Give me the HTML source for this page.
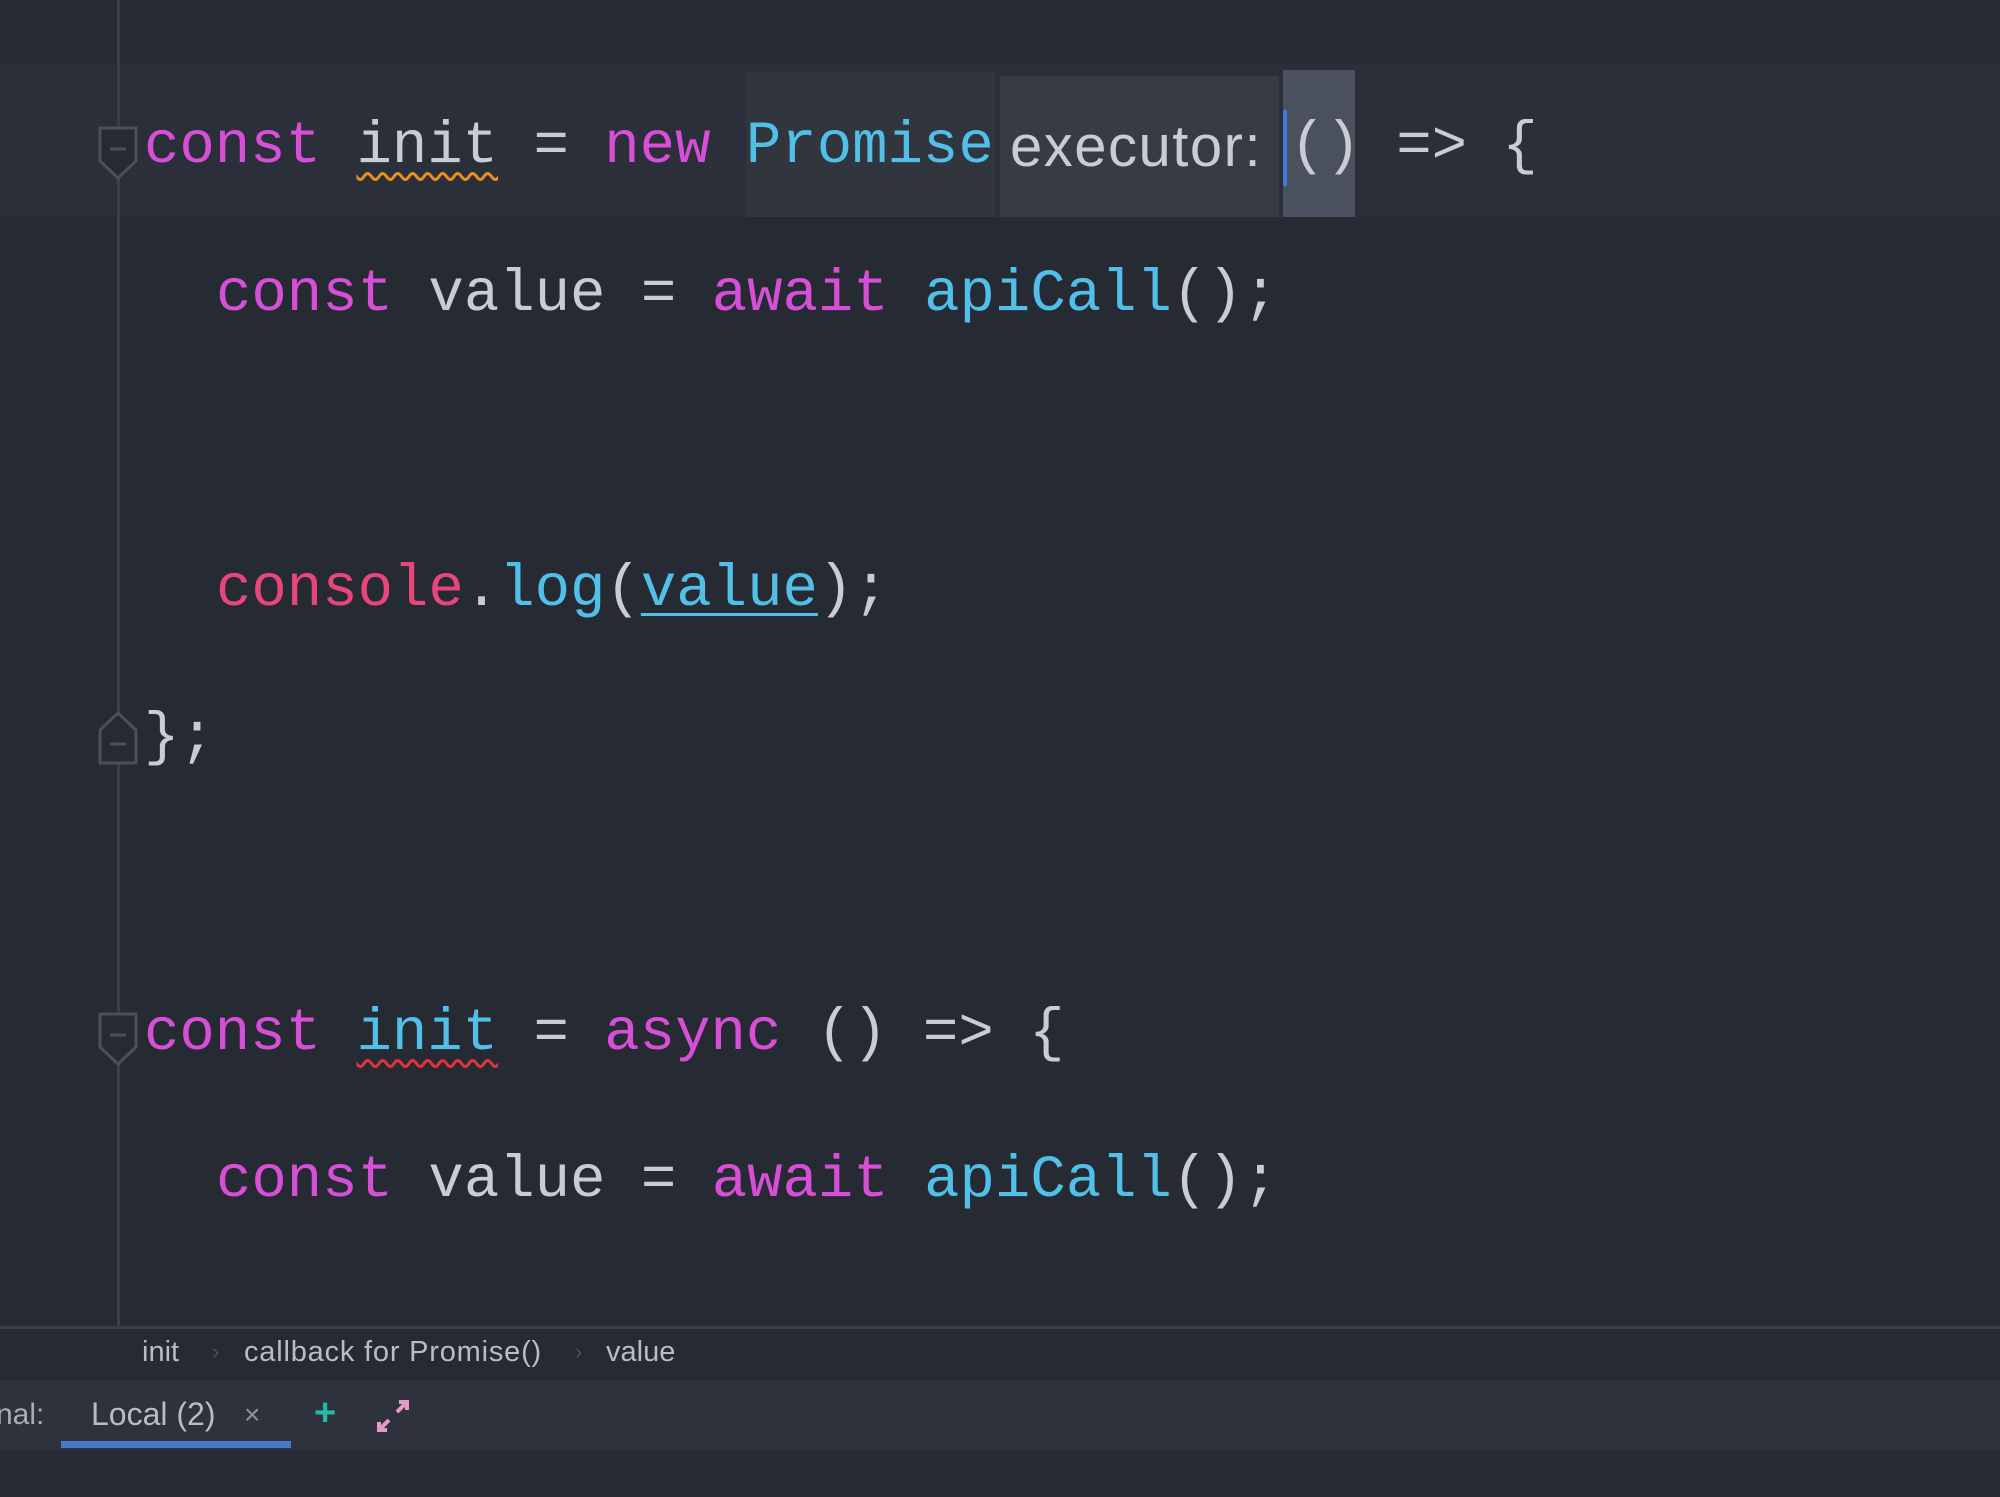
<!DOCTYPE html>
<html><head><meta charset="utf-8"><style>
*{margin:0;padding:0;box-sizing:border-box}
body{width:2000px;height:1497px;background:#262a33;position:relative;overflow:hidden;font-family:"Liberation Mono",monospace}
.ln{position:absolute;left:0;height:148px;line-height:148px;font-size:59px;color:#c9ccd2;white-space:pre}
.k{color:#d64fd6}.b{color:#52bfe8}.r{color:#e8467a}
.abs{position:absolute}
.fold{position:absolute;left:97px;width:42px;height:56px}
.sans{font-family:"Liberation Sans",sans-serif}
</style></head><body>
<div class="abs" style="left:0;top:64px;width:2000px;height:153px;background:#2b2f39"></div>
<div class="abs" style="left:746px;top:72px;width:249px;height:145px;background:#31353e"></div>
<div class="abs" style="left:1000px;top:76px;width:279px;height:141px;background:#363b45"></div>
<div class="abs" style="left:1283px;top:70px;width:72px;height:147px;background:#4a505d"></div>
<div class="abs" style="left:1283px;top:110px;width:4px;height:76px;background:#3d7be0"></div>
<div class="abs" style="left:117px;top:0;width:3px;height:1327px;background:#3a3f48"></div>

<svg class="fold" style="top:125px" viewBox="0 0 42 56"><path d="M3 3H39V36L21 53L3 36Z" fill="#262a33" stroke="#4a4f58" stroke-width="3"/><path d="M13 24H29" stroke="#4a4f58" stroke-width="3"/></svg>
<svg class="fold" style="top:710px" viewBox="0 0 42 56"><path d="M3 53H39V20L21 3L3 20Z" fill="#262a33" stroke="#4a4f58" stroke-width="3"/><path d="M13 34H29" stroke="#4a4f58" stroke-width="3"/></svg>
<svg class="fold" style="top:1011px" viewBox="0 0 42 56"><path d="M3 3H39V36L21 53L3 36Z" fill="#262a33" stroke="#4a4f58" stroke-width="3"/><path d="M13 24H29" stroke="#4a4f58" stroke-width="3"/></svg>

<div class="ln" style="top:73px;left:144px"><span class="k">const</span> <span style="text-decoration:underline wavy #e8901a;text-decoration-thickness:3px;text-underline-offset:10px">init</span> = <span class="k">new</span> <span class="b">Promise</span></div>
<div class="ln sans" style="top:73px;left:1010px;font-size:58px;letter-spacing:1.5px;color:#c9ccd2">executor:</div>
<div class="ln" style="top:73px;left:1290px">() =&gt; {</div>

<div class="ln" style="top:221px;left:216px"><span class="k">const</span> value = <span class="k">await</span> <span class="b">apiCall</span>();</div>
<div class="ln" style="top:516px;left:216px"><span class="r">console</span>.<span class="b">log</span>(<span class="b" style="text-decoration:underline;text-decoration-thickness:3px;text-underline-offset:8px">value</span>);</div>
<div class="ln" style="top:664px;left:144px">};</div>
<div class="ln" style="top:960px;left:144px"><span class="k">const</span> <span class="b" style="text-decoration:underline wavy #e0333d;text-decoration-thickness:3px;text-underline-offset:10px">init</span> = <span class="k">async</span> () =&gt; {</div>
<div class="ln" style="top:1107px;left:216px"><span class="k">const</span> value = <span class="k">await</span> <span class="b">apiCall</span>();</div>

<div class="abs" style="left:0;top:1326px;width:2000px;height:3px;background:#3a3e47"></div>
<div class="abs" style="left:0;top:1329px;width:2000px;height:51px;background:#262a33"></div>
<div class="abs sans" style="top:1336px;left:142px;font-size:29px;color:#b9bcc2;white-space:pre">init</div>
<div class="abs sans" style="top:1339px;left:212px;font-size:22px;color:#4b505a">›</div>
<div class="abs sans" style="top:1336px;left:244px;font-size:29px;color:#b9bcc2;letter-spacing:0.8px;white-space:pre">callback for Promise()</div>
<div class="abs sans" style="top:1339px;left:575px;font-size:22px;color:#4b505a">›</div>
<div class="abs sans" style="top:1336px;left:606px;font-size:29px;color:#b9bcc2">value</div>

<div class="abs" style="left:0;top:1380px;width:2000px;height:70px;background:#2e323c"></div>
<div class="abs sans" style="top:1398px;left:-4px;font-size:30px;color:#a9adb4">nal:</div>
<div class="abs sans" style="top:1396px;left:91px;font-size:32px;color:#b9bcc2">Local (2)</div>
<div class="abs sans" style="top:1399px;left:244px;font-size:28px;color:#8d9199">×</div>
<div class="abs" style="left:61px;top:1441px;width:230px;height:7px;background:#4a78c8"></div>
<div class="abs sans" style="top:1392px;left:314px;font-size:38px;color:#2bb7a8;font-weight:bold">+</div>
<svg class="abs" style="left:375px;top:1398px" width="36" height="36" viewBox="0 0 36 36"><path d="M22 14L32 4M24 4H32V12" stroke="#e79ac8" stroke-width="4" fill="none"/><path d="M14 22L4 32M4 24V32H12" stroke="#e79ac8" stroke-width="4" fill="none"/></svg>
<div class="abs" style="left:0;top:1450px;width:2000px;height:47px;background:#262a33"></div>
</body></html>
